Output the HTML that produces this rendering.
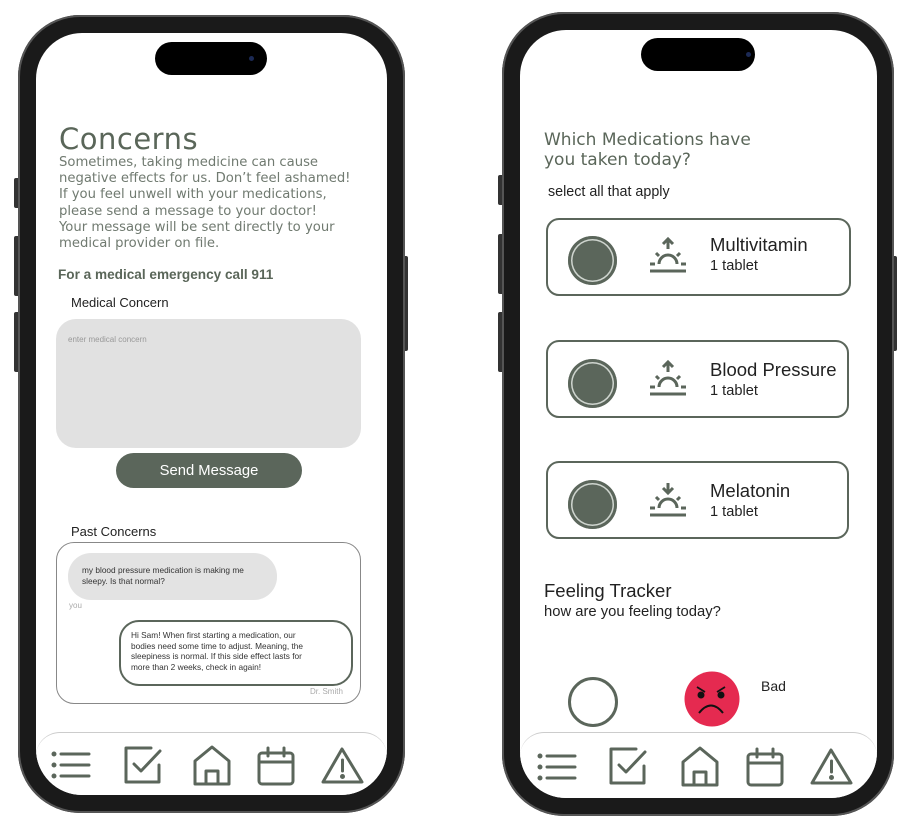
<!DOCTYPE html>
<html><head><meta charset="utf-8">
<style>
*{margin:0;padding:0;box-sizing:border-box}
body{width:912px;height:827px;background:#fff;position:relative;overflow:hidden;font-family:"Liberation Sans",sans-serif}
.a{position:absolute}
.frame{position:absolute;background:#1a1a1a;border-radius:62px;box-shadow:0 0 0 2px #555 inset}
.screen{position:absolute;background:#fff;border-radius:46px;overflow:hidden}
.island{position:absolute;background:#000;border-radius:18px}
.btn{position:absolute;background:#333;border-radius:2px}
.t{position:absolute;white-space:nowrap}
.g{color:#6f7a6f}
.card{position:absolute;border:2.5px solid #5b665b;border-radius:13px;background:#fff}
.pill{position:absolute;width:49px;height:49px;border-radius:50%;background:#5b665b;box-shadow:inset 0 0 0 3px #5b665b,inset 0 0 0 4.5px #cfd5cf}
.nav{position:absolute;border-top:1px solid #ccc;border-radius:24px 24px 0 0;background:#fff}
</style></head><body>

<!-- LEFT PHONE -->
<div class="btn" style="left:14px;top:178px;width:6px;height:30px"></div>
<div class="btn" style="left:14px;top:236px;width:6px;height:60px"></div>
<div class="btn" style="left:14px;top:312px;width:6px;height:60px"></div>
<div class="btn" style="left:402px;top:256px;width:6px;height:95px"></div>
<div class="frame" style="left:18px;top:15px;width:387px;height:798px"></div>
<div class="screen" style="left:36px;top:33px;width:351px;height:762px">
  <div class="island" style="left:119px;top:9px;width:112px;height:33px"></div>
  <div class="a" style="left:213px;top:23px;width:5px;height:5px;border-radius:50%;background:#1c2a55"></div>

  <div class="t" style="left:23px;top:89px;font-size:29px;color:#5a6659;font-family:'DejaVu Sans',sans-serif;letter-spacing:0.5px">Concerns</div>
  <div class="t g" style="left:23px;top:122px;font-size:13.2px;line-height:16.2px;font-family:'DejaVu Sans',sans-serif;color:#707a70">Sometimes, taking medicine can cause<br>negative effects for us. Don’t feel ashamed!<br>If you feel unwell with your medications,<br>please send a message to your doctor!<br>Your message will be sent directly to your<br>medical provider on file.</div>
  <div class="t" style="left:22px;top:234px;font-size:13.6px;font-weight:bold;color:#5a6659">For a medical emergency call 911</div>
  <div class="t" style="left:35px;top:262px;font-size:13px;color:#222">Medical Concern</div>
  <div class="a" style="left:20px;top:286px;width:305px;height:129px;border-radius:20px;background:#e1e1e1"></div>
  <div class="t" style="left:32px;top:302px;font-size:8px;color:#999">enter medical concern</div>
  <div class="a" style="left:80px;top:420px;width:186px;height:35px;border-radius:18px;background:#5b665b;color:#fff;font-size:14.8px;text-align:center;line-height:36px">Send Message</div>

  <div class="t" style="left:35px;top:491px;font-size:13px;color:#222">Past Concerns</div>
  <div class="a" style="left:20px;top:509px;width:305px;height:162px;border-radius:18px;border:1px solid #888"></div>
  <div class="a" style="left:32px;top:520px;width:209px;height:47px;border-radius:23px;background:#e3e3e3"></div>
  <div class="t" style="left:46px;top:532px;font-size:8.3px;line-height:11px;color:#333">my blood pressure medication is making me<br>sleepy. Is that normal?</div>
  <div class="t" style="left:33px;top:568px;font-size:8px;color:#aaa">you</div>
  <div class="a" style="left:83px;top:587px;width:234px;height:66px;border-radius:20px;border:2px solid #5b665b"></div>
  <div class="t" style="left:95px;top:597px;font-size:8.3px;line-height:10.7px;color:#333">Hi Sam! When first starting a medication, our<br>bodies need some time to adjust. Meaning, the<br>sleepiness is normal. If this side effect lasts for<br>more than 2 weeks, check in again!</div>
  <div class="t" style="left:274px;top:654px;font-size:8px;color:#aaa">Dr. Smith</div>

  <div class="nav" style="left:0;top:699px;width:351px;height:70px"></div>
  <svg class="a" style="left:0;top:699px" width="351" height="70" fill="none" stroke="#5b665b" stroke-width="3" stroke-linecap="round" stroke-linejoin="round">
    <g transform="translate(16,17)"><circle cx="2" cy="5" r="1" fill="#5b665b"/><circle cx="2" cy="16" r="1" fill="#5b665b"/><circle cx="2" cy="27" r="1" fill="#5b665b"/><path d="M9 5H37M9 16H37M9 27H37"/></g>
    <g transform="translate(88,14)"><path d="M27 2H2V36H35V19"/><path d="M10 18L17 25L36 5"/></g>
    <g transform="translate(157,14)"><path d="M2 38V15L19 1L36 15V38Z"/><path d="M13 38V25H25V38"/></g>
    <g transform="translate(221,14)"><rect x="2" y="7" width="34" height="31" rx="3"/><path d="M2 16H36M11 2V10M27 2V10"/></g>
    <g transform="translate(285,14)"><path d="M21 3L41 36H2Z"/><path d="M21.5 14V25"/><circle cx="21.5" cy="30.5" r="1" fill="#5b665b"/></g>
  </svg>
</div>

<!-- RIGHT PHONE -->
<div class="btn" style="left:498px;top:175px;width:6px;height:30px"></div>
<div class="btn" style="left:498px;top:234px;width:6px;height:60px"></div>
<div class="btn" style="left:498px;top:312px;width:6px;height:60px"></div>
<div class="btn" style="left:891px;top:256px;width:6px;height:95px"></div>
<div class="frame" style="left:502px;top:12px;width:392px;height:804px"></div>
<div class="screen" style="left:520px;top:30px;width:357px;height:768px">
  <div class="island" style="left:121px;top:8px;width:114px;height:33px"></div>
  <div class="a" style="left:226px;top:22px;width:5px;height:5px;border-radius:50%;background:#1c2a55"></div>

  <div class="t" style="left:24px;top:100px;font-size:17px;line-height:20px;color:#5a6659;font-family:'DejaVu Sans',sans-serif">Which Medications have<br>you taken today?</div>
  <div class="t" style="left:28px;top:154px;font-size:14.3px;color:#222">select all that apply</div>

  <div class="card" style="left:26px;top:188px;width:305px;height:78px"></div>
  <div class="card" style="left:26px;top:310px;width:303px;height:78px"></div>
  <div class="card" style="left:26px;top:431px;width:303px;height:78px"></div>

  <div class="pill" style="left:48px;top:206px"></div>
  <div class="pill" style="left:48px;top:329px"></div>
  <div class="pill" style="left:48px;top:450px"></div>

  <svg class="a" style="left:128px;top:206px" width="40" height="40" fill="none" stroke="#5b665b" stroke-width="3">
    <path d="M20 13V3M15 8L20 3L25 8"/><path d="M11 28A9 9 0 0 1 29 28"/><path d="M8 17L11 20M32 17L29 20"/><path d="M2 28H7M33 28H38"/><path d="M2 35H38"/>
  </svg>
  <svg class="a" style="left:128px;top:329px" width="40" height="40" fill="none" stroke="#5b665b" stroke-width="3">
    <path d="M20 13V3M15 8L20 3L25 8"/><path d="M11 28A9 9 0 0 1 29 28"/><path d="M8 17L11 20M32 17L29 20"/><path d="M2 28H7M33 28H38"/><path d="M2 35H38"/>
  </svg>
  <svg class="a" style="left:128px;top:450px" width="40" height="40" fill="none" stroke="#5b665b" stroke-width="3">
    <path d="M20 3V13M15 8L20 13L25 8"/><path d="M11 28A9 9 0 0 1 29 28"/><path d="M8 17L11 20M32 17L29 20"/><path d="M2 28H7M33 28H38"/><path d="M2 35H38"/>
  </svg>

  <div class="t" style="left:190px;top:204px;font-size:18.5px;color:#222">Multivitamin</div>
  <div class="t" style="left:190px;top:228px;font-size:14.6px;color:#222">1 tablet</div>
  <div class="t" style="left:190px;top:329px;font-size:18.5px;color:#222">Blood Pressure</div>
  <div class="t" style="left:190px;top:353px;font-size:14.6px;color:#222">1 tablet</div>
  <div class="t" style="left:190px;top:450px;font-size:18.5px;color:#222">Melatonin</div>
  <div class="t" style="left:190px;top:474px;font-size:14.6px;color:#222">1 tablet</div>

  <div class="t" style="left:24px;top:550px;font-size:18.5px;color:#222">Feeling Tracker</div>
  <div class="t" style="left:24px;top:574px;font-size:14.8px;color:#222">how are you feeling today?</div>

  <div class="a" style="left:48px;top:647px;width:50px;height:50px;border-radius:50%;border:3px solid #5b665b"></div>
  <svg class="a" style="left:164px;top:641px" width="56" height="56">
    <circle cx="28" cy="28" r="27.5" fill="#e52a50"/>
    <circle cx="17" cy="24" r="3.5" fill="#111"/><circle cx="37" cy="24" r="3.5" fill="#111"/>
    <path d="M13 16L21 21M41 16L33 21" stroke="#111" stroke-width="1.8"/>
    <path d="M15 42Q27 27 39 42" fill="none" stroke="#111" stroke-width="2"/>
  </svg>
  <div class="t" style="left:241px;top:648px;font-size:14px;color:#222">Bad</div>

  <div class="nav" style="left:0;top:702px;width:357px;height:70px"></div>
  <svg class="a" style="left:0;top:702px" width="357" height="70" fill="none" stroke="#5b665b" stroke-width="3" stroke-linecap="round" stroke-linejoin="round">
    <g transform="translate(18,19)"><circle cx="2" cy="5" r="1" fill="#5b665b"/><circle cx="2" cy="16" r="1" fill="#5b665b"/><circle cx="2" cy="27" r="1" fill="#5b665b"/><path d="M9 5H37M9 16H37M9 27H37"/></g>
    <g transform="translate(89,15)"><path d="M27 2H2V36H35V19"/><path d="M10 18L17 25L36 5"/></g>
    <g transform="translate(161,15)"><path d="M2 38V15L19 1L36 15V38Z"/><path d="M13 38V25H25V38"/></g>
    <g transform="translate(226,15)"><rect x="2" y="7" width="34" height="31" rx="3"/><path d="M2 16H36M11 2V10M27 2V10"/></g>
    <g transform="translate(290,15)"><path d="M21 3L41 36H2Z"/><path d="M21.5 14V25"/><circle cx="21.5" cy="30.5" r="1" fill="#5b665b"/></g>
  </svg>
</div>
</body></html>
